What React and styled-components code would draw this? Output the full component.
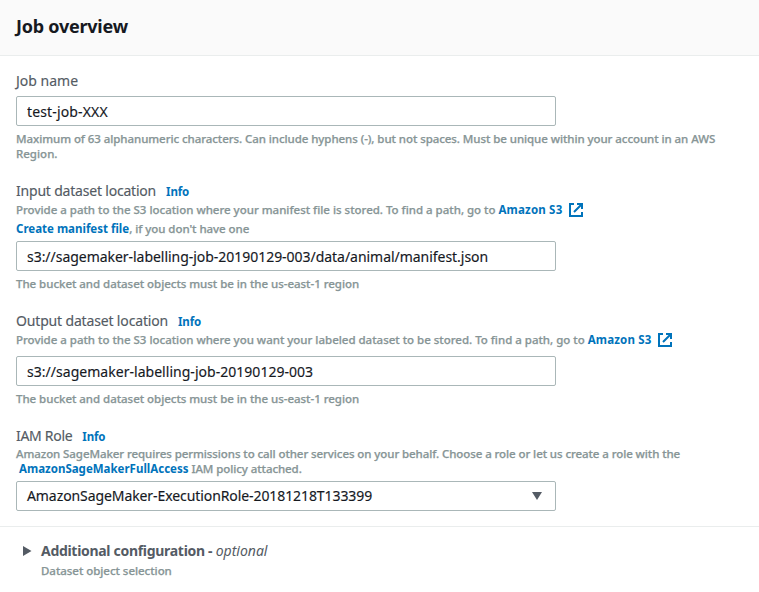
import React from "react";
import styled, { createGlobalStyle } from "styled-components";

const GlobalStyle = createGlobalStyle`
  *, *::before, *::after { box-sizing: border-box; }
  body {
    margin: 0;
    background: #fff;
    color: #16191f;
    font-family: "Noto Sans", "Open Sans", sans-serif;
    font-size: 14px;
  }
`;

const Panel = styled.section`
  min-height: 592px;
  overflow: hidden;
`;

const PanelHeader = styled.header`
  display: flex;
  align-items: center;
  height: 56px;
  padding: 0 16px 3px;
  background: #fafafa;
  border-bottom: 1px solid #eaeded;
`;

const Title = styled.h2`
  margin: 0;
  font-size: 18px;
  line-height: 22px;
  font-weight: 700;
  letter-spacing: -0.24px;
`;

const Form = styled.div`
  display: flex;
  flex-direction: column;
  gap: 19px;
  padding: 15px 16px;
`;

const Field = styled.div`
  display: flex;
  flex-direction: column;
  align-items: flex-start;
`;

const LabelRow = styled.div`
  display: flex;
  align-items: baseline;
  gap: 10px;
  height: 20px;
  line-height: 20px;
`;

const Label = styled.label`
  color: #545b64;
  letter-spacing: ${(p) => p.$track || 0}px;
  -webkit-text-stroke: 0.15px currentColor;
`;

const Link = styled.a`
  color: #0073bb;
  font-weight: 700;
  text-decoration: none;
  letter-spacing: ${(p) => p.$track || 0}px;
`;

const InfoLink = styled(Link)`
  font-size: 11.5px;
  letter-spacing: -0.15px;
`;

const HelpText = styled.div`
  margin-top: ${(p) => (p.$top || 0) - 1}px;
  margin-bottom: 1px;
  color: #879596;
  font-size: 11.5px;
  font-weight: 500;
  line-height: ${(p) => p.$line || 15}px;
  white-space: nowrap;
  -webkit-text-stroke: 0.25px currentColor;

  ${Link} {
    -webkit-text-stroke: 0;
  }
`;

const Line = styled.div`
  white-space: pre;
  padding-left: ${(p) => p.$indent || 0}px;
  letter-spacing: ${(p) => p.$track || 0}px;
`;

const LinkLine = styled(Line)`
  display: flex;
  align-items: center;
  height: 19px;
`;

const Control = styled.div`
  display: flex;
  align-items: center;
  width: 540px;
  height: 30px;
  margin-top: ${(p) => p.$top}px;
  padding: 0 13px 0 10px;
  background: #fff;
  border: 1px solid #aab7b8;
  border-radius: 2px;
`;

const TextInput = styled.input`
  flex: 1;
  min-width: 0;
  height: 28px;
  padding: 1px 0 1px;
  border: 0;
  outline: 0;
  background: transparent;
  color: #16191f;
  font: inherit;
  letter-spacing: ${(p) => p.$track || 0}px;
  -webkit-text-stroke: 0.15px currentColor;
`;

const SelectValue = styled.span`
  flex: 1;
  padding-bottom: 2px;
  letter-spacing: -0.085px;
  -webkit-text-stroke: 0.15px currentColor;
`;

const ExternalSvg = styled.svg`
  flex: none;
  margin: 1px 0 0 6.4px;
`;

const Expander = styled.div`
  display: grid;
  grid-template-columns: 18px 1fr;
  align-items: center;
  padding: 14px 16px 0 23px;
  border-top: 1px solid #eaeded;
`;

const ExpanderTitle = styled.div`
  color: #545b64;
  line-height: 20px;
  font-weight: 700;
  letter-spacing: -0.3px;
  white-space: pre;
`;

const Optional = styled.em`
  font-weight: 400;
  letter-spacing: 0;
`;

const ExpanderHint = styled(HelpText)`
  grid-column: 2;
  letter-spacing: -0.04px;
`;

function ExternalIcon() {
  return (
    <ExternalSvg width="14" height="14" viewBox="0 0 14 14" fill="none" stroke="#0073bb" strokeWidth="2">
      <path d="M5 1H1v12h12V9" />
      <path d="M8 1h5v5M12.5 1.5L5 9" />
    </ExternalSvg>
  );
}

function LabelLine({ text, track, info }) {
  return (
    <LabelRow>
      <Label $track={track}>{text}</Label>
      {info && <InfoLink>Info</InfoLink>}
    </LabelRow>
  );
}

function Input({ value, top, track }) {
  return (
    <Control $top={top}>
      <TextInput defaultValue={value} $track={track} spellCheck={false} />
    </Control>
  );
}

function PathHelp({ children }) {
  return (
    <LinkLine $track={-0.013}>
      <span>
        {children}
        <Link $track={0.18}>Amazon S3</Link>
      </span>
      <ExternalIcon />
    </LinkLine>
  );
}

function RegionHint() {
  return (
    <HelpText $top={6}>
      <Line $track={-0.035}>The bucket and dataset objects must be in the us-east-1 region</Line>
    </HelpText>
  );
}

export default function App() {
  return (
    <>
      <GlobalStyle />
      <Panel>
        <PanelHeader>
          <Title>Job overview</Title>
        </PanelHeader>
        <Form>
          <Field>
            <LabelLine text="Job name" />
            <Input value="test-job-XXX" top={5} track={0.15} />
            <HelpText $top={6}>
              <Line $track={-0.07}>
                Maximum of 63 alphanumeric characters. Can include hyphens (-), but not spaces. Must be unique within your account in an AWS
              </Line>
              <Line>Region.</Line>
            </HelpText>
          </Field>

          <Field>
            <LabelLine text="Input dataset location" track={-0.2} info />
            <HelpText $line={19}>
              <PathHelp>
                {"Provide a path to the S3 location where your manifest file is stored. To find a path, go to "}
              </PathHelp>
              <Line $track={-0.05}>
                <Link>Create manifest file</Link>
                {", if you don't have one"}
              </Line>
            </HelpText>
            <Input
              value="s3://sagemaker-labelling-job-20190129-003/data/animal/manifest.json"
              top={2}
              track={-0.035}
            />
            <RegionHint />
          </Field>

          <Field>
            <LabelLine text="Output dataset location" track={-0.16} info />
            <HelpText $line={19}>
              <PathHelp>
                {"Provide a path to the S3 location where you want your labeled dataset to be stored. To find a path, go to "}
              </PathHelp>
            </HelpText>
            <Input value="s3://sagemaker-labelling-job-20190129-003" top={6} track={0.03} />
            <RegionHint />
          </Field>

          <Field>
            <LabelLine text="IAM Role" track={-0.3} info />
            <HelpText $top={1}>
              <Line $track={-0.085}>
                Amazon SageMaker requires permissions to call other services on your behalf. Choose a role or let us create a role with the
              </Line>
              <Line $indent={3} $track={-0.08}>
                <Link>AmazonSageMakerFullAccess</Link>
                {" IAM policy attached."}
              </Line>
            </HelpText>
            <Control $top={4}>
              <SelectValue>AmazonSageMaker-ExecutionRole-20181218T133399</SelectValue>
              <svg width="10" height="8" viewBox="0 0 10 8" fill="#545b64">
                <path d="M0 0h10L5 8z" />
              </svg>
            </Control>
          </Field>
        </Form>
        <Expander>
          <svg width="9" height="10" viewBox="0 0 9 10" fill="#545b64">
            <path d="M0 0l8.5 5L0 10z" />
          </svg>
          <ExpanderTitle>
            {"Additional configuration - "}
            <Optional>optional</Optional>
          </ExpanderTitle>
          <ExpanderHint $top={3}>Dataset object selection</ExpanderHint>
        </Expander>
      </Panel>
    </>
  );
}
